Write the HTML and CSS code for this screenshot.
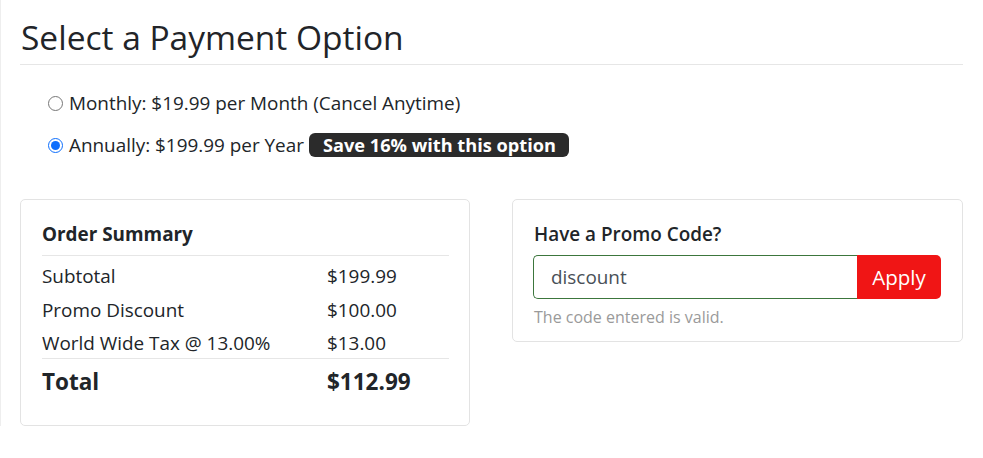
FILE: index.html
```html
<!DOCTYPE html>
<html>
<head>
<meta charset="utf-8">
<link rel="stylesheet" href="styles.css">
</head>
<body>
<div class="page">
  <h1 class="title">Select a Payment Option</h1>
  <div class="options">
    <label class="option"><input type="radio" name="plan"> <span>Monthly: $19.99 per Month (Cancel Anytime)</span></label>
    <label class="option"><input type="radio" name="plan" checked> <span>Annually: $199.99 per Year</span> <span class="badge">Save 16% with this option</span></label>
  </div>
  <div class="cards">
    <div class="card summary">
      <div class="card-title">Order Summary</div>
      <div class="rows">
        <div class="row"><span class="label">Subtotal</span><span class="value">$199.99</span></div>
        <div class="row"><span class="label">Promo Discount</span><span class="value">$100.00</span></div>
        <div class="row"><span class="label">World Wide Tax @ 13.00%</span><span class="value">$13.00</span></div>
      </div>
      <div class="row total"><span class="label">Total</span><span class="value">$112.99</span></div>
    </div>
    <div class="card promo">
      <div class="promo-title">Have a Promo Code?</div>
      <div class="input-group">
        <input class="promo-input" type="text" value="discount">
        <button class="apply">Apply</button>
      </div>
      <div class="help">The code entered is valid.</div>
    </div>
  </div>
</div>
</body>
</html>
```
FILE: styles.css
```css
html, body {
  margin: 0;
  padding: 0;
  background: #fff;
}
body {
  font-family: "Open Sans", "Liberation Sans", sans-serif;
  color: #212529;
}
.page {
  padding: 0 20px 0 19px;
  width: 943px;
  border-left: 1px solid #eee;
}
.title {
  margin: 0;
  padding: 15px 0 5px 1px;
  font-size: 33.5px;
  font-weight: 500;
  line-height: 44px;
  color: #222428;
  border-bottom: 1px solid #e6e6e6;
}
.options {
  padding: 21px 0 0 28px;
  display: flex;
  flex-direction: column;
  gap: 8px;
}
.option {
  display: flex;
  align-items: center;
  font-size: 18.9px;
  line-height: 34px;
  height: 34px;
}
.option input {
  margin: 0 6px 0 0;
  width: 15px;
  height: 15px;
}
.option input[type=radio] {
  accent-color: #0d6efd;
}
.badge {
  display: inline-block;
  margin-left: 5px;
  background: #2b2b2b;
  color: #fff;
  font-weight: 700;
  font-size: 18.2px;
  line-height: 24px;
  padding: 0 13px 0 14px;
  border-radius: 6px;
}
.cards {
  margin-top: 37px;
  display: flex;
  gap: 42px;
  align-items: flex-start;
}
.card {
  width: 450px;
  box-sizing: border-box;
  border: 1px solid #e3e3e3;
  border-radius: 5px;
  padding: 21px 20px 21px 21px;
}
.summary {
  padding-bottom: 21px;
}
.card-title {
  font-size: 18.9px;
  font-weight: 700;
  line-height: 26px;
  padding-bottom: 8px;
  border-bottom: 1px solid #e6e6e6;
}
.rows {
  padding-top: 4px;
  border-bottom: 1px solid #e6e6e6;
}
.row {
  display: flex;
  font-size: 18.9px;
  line-height: 33.5px;
}
.rows .row:last-child {
  margin-bottom: -3px;
}
.row .label {
  width: 285px;
}
.total {
  font-size: 22.5px;
  font-weight: 700;
  line-height: 44px;
  padding-top: 1px;
}
.promo {
  width: 451px;
  padding-bottom: 14px;
}
.promo-title {
  font-size: 18.9px;
  font-weight: 600;
  line-height: 26px;
  margin-bottom: 8px;
}
.input-group {
  display: flex;
  height: 44px;
}
.promo-input {
  box-sizing: border-box;
  width: 324px;
  height: 44px;
  margin-left: -1px;
  border: 1px solid #3c763d;
  border-right: none;
  border-radius: 5px 0 0 5px;
  padding: 0 17px;
  font-family: inherit;
  font-size: 18.9px;
  color: #495057;
  outline: none;
}
.apply {
  width: 84px;
  height: 44px;
  border: none;
  background: #f01515;
  color: #fff;
  font-family: inherit;
  font-size: 20.5px;
  border-radius: 0 5px 5px 0;
  padding: 0;
}
.help {
  margin-top: 8px;
  font-size: 16px;
  line-height: 20px;
  color: #9a9a9a;
}
```
